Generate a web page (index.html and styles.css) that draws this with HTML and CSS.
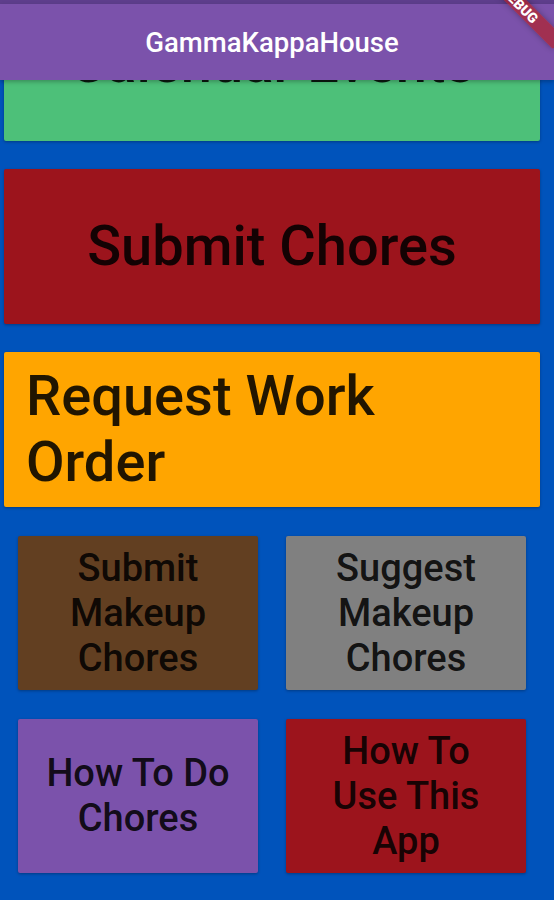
FILE: index.html
```html
<!DOCTYPE html>
<html lang="en">
<head>
    <meta charset="UTF-8">
    <meta name="viewport" content="width=device-width, initial-scale=1.0">
    <title>GammaKappaHouse</title>
    <link rel="stylesheet" href="styles.css">
</head>
<body>
    <div class="screen">
        <div class="status-bar"></div>
        <header class="app-bar">
            <h1 class="app-title">GammaKappaHouse</h1>
        </header>
        <main class="content">
            <div class="menu">
                <button class="menu-btn wide green">Calendar Events</button>
                <button class="menu-btn wide red">Submit Chores</button>
                <button class="menu-btn wide orange left">Request Work Order</button>
                <div class="menu-grid">
                    <button class="menu-btn small brown">Submit Makeup Chores</button>
                    <button class="menu-btn small grey">Suggest Makeup Chores</button>
                    <button class="menu-btn small purple">How To Do Chores</button>
                    <button class="menu-btn small red">How To Use This App</button>
                </div>
            </div>
        </main>
        <div class="debug-banner">DEBUG</div>
    </div>
</body>
</html>
```

FILE: styles.css
```css
body {
    margin: 0;
    font-family: 'Roboto', 'Liberation Sans', sans-serif;
    background-color: #0053bb;
}
.screen {
    position: relative;
    height: 100vh;
    display: flex;
    flex-direction: column;
    overflow: hidden;
}
.status-bar {
    flex-shrink: 0;
    height: 4px;
    background-color: #5e3e8c;
}
.app-bar {
    position: relative;
    z-index: 1;
    flex-shrink: 0;
    height: 76px;
    display: flex;
    align-items: center;
    justify-content: center;
    padding-right: 10px;
    background-color: #7b52ab;
    box-shadow: 0 2px 4px rgba(0, 0, 0, 0.25);
}
.app-title {
    margin: 0;
    font-size: 27.5px;
    font-weight: 500;
    color: #fff;
}
.content {
    flex: 1;
    min-height: 0;
    overflow: hidden;
}
.menu {
    display: flex;
    flex-direction: column;
    gap: 28px;
    margin-top: -94px;
    padding: 0 14px 0 4px;
}
.menu-btn {
    display: flex;
    align-items: center;
    justify-content: center;
    border: none;
    border-radius: 2px;
    padding: 0 22px;
    font-family: inherit;
    font-weight: 500;
    text-align: center;
    color: rgba(0, 0, 0, 0.87);
    box-shadow: 0 1px 3px rgba(0, 0, 0, 0.3);
    cursor: pointer;
}
.menu-btn.wide {
    height: 155px;
    font-size: 56px;
    line-height: 1.172;
}
.menu-btn.left {
    justify-content: flex-start;
    text-align: left;
}
.menu-btn.small {
    height: 154px;
    font-size: 38px;
    line-height: 45px;
}
.menu-grid {
    display: grid;
    grid-template-columns: 240px 240px;
    column-gap: 28px;
    row-gap: 29px;
    padding: 1px 14px 0;
}
.green {
    background-color: #4dc079;
}
.red {
    background-color: #9c141c;
}
.orange {
    background-color: #ffa500;
}
.brown {
    background-color: #623f21;
}
.grey {
    background-color: #808080;
}
.purple {
    background-color: #7b52ab;
}
.debug-banner {
    position: absolute;
    z-index: 2;
    left: 466px;
    top: -3px;
    width: 108px;
    height: 16px;
    transform: rotate(45deg);
    background-color: rgba(183, 28, 28, 0.63);
    box-shadow: 0 0 6px rgba(0, 0, 0, 0.3);
    color: #fff;
    font-size: 14px;
    font-weight: 900;
    line-height: 16px;
    text-align: center;
}
```
